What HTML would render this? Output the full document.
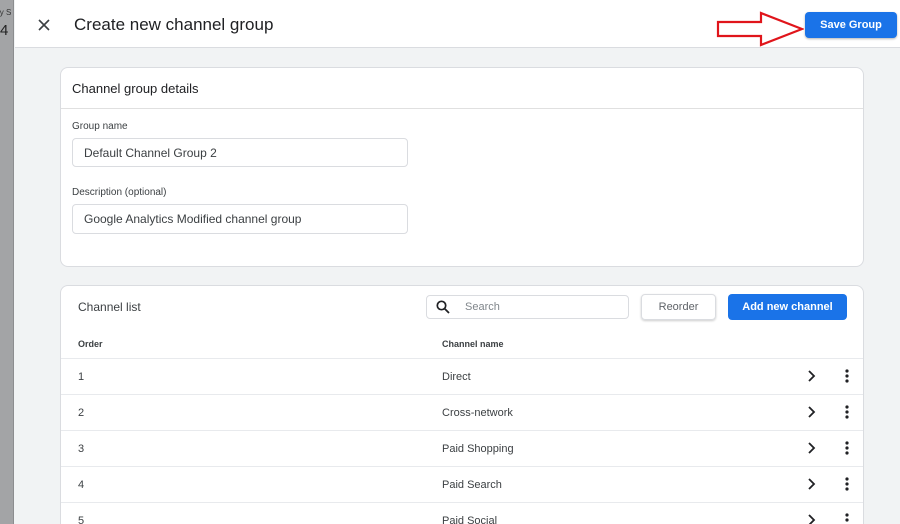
<!DOCTYPE html>
<html style="overflow:hidden;width:900px;height:524px"><head><style>
*{box-sizing:border-box;margin:0;padding:0}
html,body{overflow:hidden}
body{width:900px;height:524px;background:#f1f3f4;font-family:"Liberation Sans",Arial,sans-serif;position:relative;color:#3c4043}
.abs{position:absolute}
.strip{left:0;top:0;width:14px;height:524px;background:#a3a4a6;border-right:1px solid #8c8d8f;overflow:hidden;white-space:nowrap}
.hdr{left:15px;top:0;width:885px;height:48px;background:#fff;border-bottom:1px solid #dadce0}
.card{background:#fff;border:1px solid #dadce0;border-radius:8px}
.inp{border:1px solid #dadce0;border-radius:4px;font-size:12px;color:#3c4043;padding-left:11px;display:flex;align-items:center}
.lbl{font-size:10px;color:#3c4043}
.row{left:61px;width:802px;height:36px;border-top:1px solid #e8eaed;font-size:11px;color:#3c4043}
.row span{position:absolute;top:12px}
</style></head><body>
<div class="abs strip"><div class="abs" style="left:-2px;top:8px;font-size:8px;color:#333">ly S</div><div class="abs" style="left:0;top:22px;font-size:15px;color:#222">4</div></div>
<div class="abs hdr"></div>
<svg class="abs" style="left:38px;top:19px" width="12" height="12" viewBox="0 0 12 12"><path d="M1 1L11 11M11 1L1 11" stroke="#3c4043" stroke-width="1.6"/></svg>
<div class="abs" style="left:74px;top:15px;font-size:17px;color:#202124">Create new channel group</div>
<svg class="abs" style="left:716px;top:11px" width="88" height="36" viewBox="0 0 88 36"><path d="M2 11H45V2L86 18L45 34V25H2Z" fill="#fff" stroke="#e0151b" stroke-width="2.2"/></svg>
<div class="abs" style="left:805px;top:12px;width:92px;height:26px;background:#1a73e8;border-radius:4px;color:#fff;font-size:11px;font-weight:bold;display:flex;align-items:center;justify-content:center;box-shadow:0 1px 2px rgba(0,0,0,.3)">Save Group</div>

<div class="abs card" style="left:60px;top:67px;width:804px;height:200px"></div>
<div class="abs" style="left:72px;top:81px;font-size:13px;color:#202124">Channel group details</div>
<div class="abs" style="left:61px;top:108px;width:802px;height:1px;background:#e0e0e0"></div>
<div class="abs lbl" style="left:72px;top:121px">Group name</div>
<div class="abs inp" style="left:72px;top:138px;width:336px;height:29px">Default Channel Group 2</div>
<div class="abs lbl" style="left:72px;top:187px">Description (optional)</div>
<div class="abs inp" style="left:72px;top:204px;width:336px;height:30px">Google Analytics Modified channel group</div>

<div class="abs card" style="left:60px;top:285px;width:804px;height:260px"></div>
<div class="abs" style="left:78px;top:300px;font-size:12px;color:#3c4043">Channel list</div>
<div class="abs inp" style="left:426px;top:295px;width:203px;height:24px;padding-left:38px;color:#80868b;font-size:11px">Search</div>
<svg class="abs" style="left:436px;top:300px" width="14" height="14" viewBox="0 0 14 14"><circle cx="5.5" cy="5.5" r="4.2" fill="none" stroke="#202124" stroke-width="1.7"/><path d="M8.5 8.5L13 13" stroke="#202124" stroke-width="1.8"/></svg>
<div class="abs" style="left:641px;top:294px;width:75px;height:26px;border:1px solid #dadce0;border-radius:4px;box-shadow:0 1px 2px rgba(0,0,0,.2);font-size:11px;color:#5f6368;display:flex;align-items:center;justify-content:center">Reorder</div>
<div class="abs" style="left:728px;top:294px;width:119px;height:26px;background:#1a73e8;border-radius:4px;color:#fff;font-size:11px;font-weight:bold;display:flex;align-items:center;justify-content:center">Add new channel</div>
<div class="abs" style="left:78px;top:339px;font-size:9px;font-weight:bold;color:#3c4043">Order</div>
<div class="abs" style="left:442px;top:339px;font-size:9px;font-weight:bold;color:#3c4043">Channel name</div>

<div class="abs row" style="top:358px"><span style="left:17px">1</span><span style="left:381px">Direct</span></div>
<div class="abs row" style="top:394px"><span style="left:17px">2</span><span style="left:381px">Cross-network</span></div>
<div class="abs row" style="top:430px"><span style="left:17px">3</span><span style="left:381px">Paid Shopping</span></div>
<div class="abs row" style="top:466px"><span style="left:17px">4</span><span style="left:381px">Paid Search</span></div>
<div class="abs row" style="top:502px"><span style="left:17px">5</span><span style="left:381px">Paid Social</span></div>

<svg class="abs" style="left:800px;top:358px" width="60" height="166" viewBox="0 0 60 166">
<g fill="none" stroke="#202124" stroke-width="1.8"><path d="M9 13L14 18L9 23"/><path d="M9 49L14 54L9 59"/><path d="M9 85L14 90L9 95"/><path d="M9 121L14 126L9 131"/><path d="M9 157L14 162L9 167"/></g>
<g fill="#202124"><circle cx="47" cy="13" r="1.6"/><circle cx="47" cy="18" r="1.6"/><circle cx="47" cy="23" r="1.6"/>
<circle cx="47" cy="49" r="1.6"/><circle cx="47" cy="54" r="1.6"/><circle cx="47" cy="59" r="1.6"/>
<circle cx="47" cy="85" r="1.6"/><circle cx="47" cy="90" r="1.6"/><circle cx="47" cy="95" r="1.6"/>
<circle cx="47" cy="121" r="1.6"/><circle cx="47" cy="126" r="1.6"/><circle cx="47" cy="131" r="1.6"/>
<circle cx="47" cy="157" r="1.6"/><circle cx="47" cy="162" r="1.6"/></g>
</svg>
</body></html>
